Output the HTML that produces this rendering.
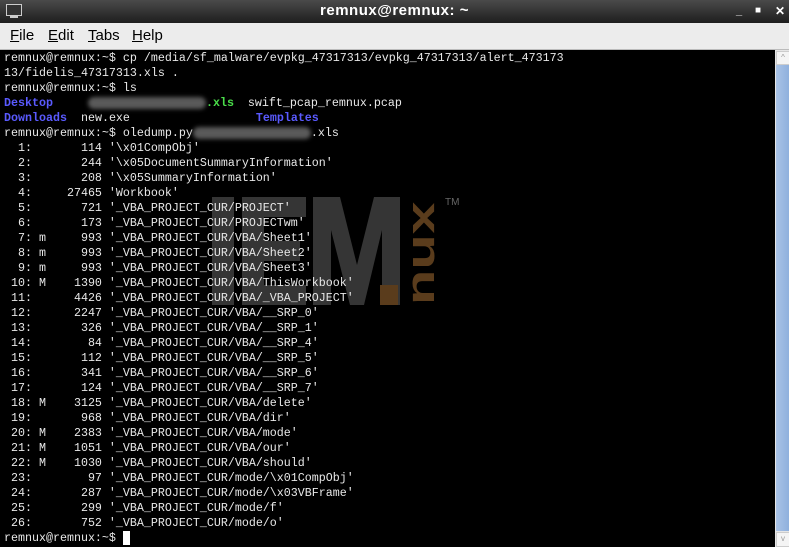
<!DOCTYPE html>
<html><head><style>
body{margin:0;width:789px;height:547px;overflow:hidden;background:#000;position:relative;font-family:"Liberation Sans",sans-serif}
#title{position:absolute;left:0;top:0;width:789px;height:23px;background:linear-gradient(#4a4a4a,#1e1e1e);color:#fff;font-weight:bold;font-size:15px;text-align:center;line-height:22px;letter-spacing:.5px}
#menu{position:absolute;left:0;top:23px;width:789px;height:26px;background:#ececec;border-bottom:1px solid #bbb;font-size:15px;color:#000}
#menu span{position:absolute;top:4px}
#term{position:absolute;left:0;top:50px;width:775px;height:497px;background:#000;overflow:hidden}
pre{margin:0;position:absolute;left:4px;top:1px;font-family:"Liberation Mono",monospace;font-size:11.67px;line-height:15px;color:#e8e8e8}
.b{color:#5a5aff;font-weight:bold}.g{color:#4ade4a;font-weight:bold}
.blur{display:inline-block;background:#5a5a5a;border-radius:7px;height:12px;vertical-align:middle;filter:blur(2px)}
#sb{position:absolute;left:775px;top:50px;width:14px;height:497px;background:#e6e6e6}
#thumb{position:absolute;left:776px;top:64px;width:13px;height:467px;background:linear-gradient(90deg,#a9c3e6,#8fb0dd)}
</style></head><body>
<div id="title">remnux@remnux: ~
<div style="position:absolute;left:6px;top:4px;width:14px;height:10px;border:1px solid #ccc;background:#333"></div>
<div style="position:absolute;left:10px;top:16px;width:8px;height:2px;background:#ccc"></div>
<span style="position:absolute;left:736px;top:0;font-size:11px">_</span>
<span style="position:absolute;left:755px;top:0;font-size:10px">■</span>
<span style="position:absolute;left:775px;top:0;font-size:12px">✕</span>
</div>
<div id="menu"><span style="left:10px"><u>F</u>ile</span><span style="left:48px"><u>E</u>dit</span><span style="left:88px"><u>T</u>abs</span><span style="left:132px"><u>H</u>elp</span></div>
<div id="term">
<svg width="775" height="497" style="position:absolute;left:0;top:0">
<g fill="#353535">
<rect x="212" y="147" width="22" height="108"/>
<rect x="242" y="147" width="22" height="108"/>
<rect x="242" y="147" width="64" height="20"/>
<rect x="242" y="191" width="58" height="20"/>
<rect x="242" y="235" width="64" height="20"/>
<path d="M313 147 H340 L357 215 L374 147 H400 V255 H382 V180 L364 255 H350 L331 180 V255 H313 Z"/>
</g>
<rect x="380" y="235" width="18" height="20" fill="#5a3c1c"/>
<text x="0" y="0" transform="translate(413,152) rotate(90)" font-family="Liberation Sans" font-weight="bold" font-size="40" fill="#5a3c1c" textLength="103" lengthAdjust="spacingAndGlyphs">xnu</text>
<text x="445" y="155" font-family="Liberation Sans" font-size="10" fill="#666">TM</text>
</svg>
<pre>remnux@remnux:~$ cp /media/sf_malware/evpkg_47317313/evpkg_47317313/alert_473173
13/fidelis_47317313.xls .
remnux@remnux:~$ ls
<span class="b">Desktop</span>     <span class="blur" style="width:118px"></span><span class="g">.xls</span>  swift_pcap_remnux.pcap
<span class="b">Downloads</span>  new.exe                  <span class="b">Templates</span>
remnux@remnux:~$ oledump.py<span class="blur" style="width:118px"></span>.xls
  1:       114 '\x01CompObj'
  2:       244 '\x05DocumentSummaryInformation'
  3:       208 '\x05SummaryInformation'
  4:     27465 'Workbook'
  5:       721 '_VBA_PROJECT_CUR/PROJECT'
  6:       173 '_VBA_PROJECT_CUR/PROJECTwm'
  7: m     993 '_VBA_PROJECT_CUR/VBA/Sheet1'
  8: m     993 '_VBA_PROJECT_CUR/VBA/Sheet2'
  9: m     993 '_VBA_PROJECT_CUR/VBA/Sheet3'
 10: M    1390 '_VBA_PROJECT_CUR/VBA/ThisWorkbook'
 11:      4426 '_VBA_PROJECT_CUR/VBA/_VBA_PROJECT'
 12:      2247 '_VBA_PROJECT_CUR/VBA/__SRP_0'
 13:       326 '_VBA_PROJECT_CUR/VBA/__SRP_1'
 14:        84 '_VBA_PROJECT_CUR/VBA/__SRP_4'
 15:       112 '_VBA_PROJECT_CUR/VBA/__SRP_5'
 16:       341 '_VBA_PROJECT_CUR/VBA/__SRP_6'
 17:       124 '_VBA_PROJECT_CUR/VBA/__SRP_7'
 18: M    3125 '_VBA_PROJECT_CUR/VBA/delete'
 19:       968 '_VBA_PROJECT_CUR/VBA/dir'
 20: M    2383 '_VBA_PROJECT_CUR/VBA/mode'
 21: M    1051 '_VBA_PROJECT_CUR/VBA/our'
 22: M    1030 '_VBA_PROJECT_CUR/VBA/should'
 23:        97 '_VBA_PROJECT_CUR/mode/\x01CompObj'
 24:       287 '_VBA_PROJECT_CUR/mode/\x03VBFrame'
 25:       299 '_VBA_PROJECT_CUR/mode/f'
 26:       752 '_VBA_PROJECT_CUR/mode/o'
remnux@remnux:~$ <span style="background:#fff">&nbsp;</span></pre>
</div>
<div id="sb"></div><div id="thumb"></div>
<div style="position:absolute;left:776px;top:51px;width:12px;height:12px;background:#f4f4f4;border:1px solid #ccc;font-size:8px;color:#999;text-align:center;line-height:12px">^</div>
<div style="position:absolute;left:776px;top:532px;width:12px;height:13px;background:#f4f4f4;border:1px solid #ccc;font-size:8px;color:#999;text-align:center;line-height:12px">v</div>
</body></html>
